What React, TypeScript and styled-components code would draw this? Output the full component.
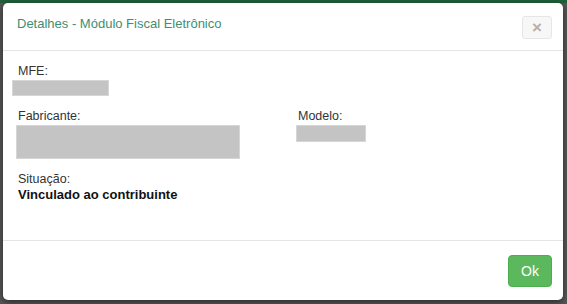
import React from 'react'
import styled, { createGlobalStyle } from 'styled-components'

const Global = createGlobalStyle`
  html, body {
    margin: 0;
    padding: 0;
    width: 567px;
    height: 304px;
    overflow: hidden;
    background: #4d4d4d;
    font-family: "Liberation Sans", Arial, sans-serif;
  }
`

const App = () => {
  return (
    <>
      <Global />
      <Backdrop>
        <Modal>
          <Header>
            <Title>Detalhes - Módulo Fiscal Eletrônico</Title>
            <Close>×</Close>
          </Header>
          <Body>
            <Field>
              <Label>MFE:</Label>
              <Masked w={97} h={16} shift={-4} />
            </Field>
            <Row>
              <Field>
                <Label>Fabricante:</Label>
                <Masked w={224} h={34} shift={0} />
              </Field>
              <Field>
                <Label>Modelo:</Label>
                <Masked w={70} h={17} shift={0} />
              </Field>
            </Row>
            <Field>
              <Label>Situação:</Label>
              <Value>Vinculado ao contribuinte</Value>
            </Field>
          </Body>
          <Footer>
            <OkButton>Ok</OkButton>
          </Footer>
        </Modal>
      </Backdrop>
    </>
  )
}

export default App

const Backdrop = styled.div`
    width: 567px;
    height: 304px;
    padding: 3px 4px 0 3px;
    box-sizing: border-box;
    background: linear-gradient(#1f5f3a 0, #1f5f3a 3px, #555 3px);
`
const Modal = styled.div`
    width: 560px;
    height: 297px;
    background-color: #fff;
    border-radius: 5px;
    display: flex;
    flex-direction: column;
    overflow: hidden;
    box-shadow: 0 2px 6px rgba(0, 0, 0, 0.5);
`
const Header = styled.div`
    height: 47px;
    display: flex;
    align-items: center;
    justify-content: space-between;
    padding: 0 11px 0 14px;
    border-bottom: 1px solid #e5e5e5;
`
const Title = styled.div`
    color: #3e8e72;
    font-size: 13px;
    margin-top: -6px;
`
const Close = styled.div`
    width: 30px;
    height: 23px;
    margin-top: 2px;
    border: 1px solid #e6e6e6;
    border-radius: 3px;
    background-color: #f7f7f7;
    color: #b0b0b0;
    font-size: 17px;
    font-weight: bold;
    display: flex;
    justify-content: center;
    align-items: center;
    box-sizing: border-box;
`
const Body = styled.div`
    height: 190px;
    padding: 13px 15px 0 13px;
    box-sizing: border-box;
    display: flex;
    flex-direction: column;
    gap: 13px;
    border-bottom: 1px solid #e5e5e5;
`
const Row = styled.div`
    display: flex;
    gap: 54px;
`
const Field = styled.div`
    display: flex;
    flex-direction: column;
    min-width: 226px;
`
const Label = styled.div`
    color: #333;
    font-size: 12.5px;
    line-height: 14px;
    padding-left: 2px;
`
const Masked = styled.div<{ w: number; h: number; shift: number }>`
    width: ${p => p.w}px;
    height: ${p => p.h}px;
    margin-left: ${p => p.shift}px;
    margin-top: 2px;
    background-color: #c4c4c4;
    border: 1px solid #d6d6d6;
    box-sizing: border-box;
`
const Value = styled.div`
    color: #111;
    font-size: 13px;
    font-weight: bold;
    line-height: 17px;
    padding-left: 2px;
`
const Footer = styled.div`
    flex: 1;
    display: flex;
    justify-content: flex-end;
    align-items: flex-start;
    padding: 14px 11px 0 0;
`
const OkButton = styled.div`
    width: 44px;
    height: 32px;
    display: flex;
    justify-content: center;
    align-items: center;
    color: #fff;
    font-size: 14px;
    background-color: #5cb85c;
    border: 1px solid #4cae4c;
    border-radius: 4px;
    box-sizing: border-box;
    cursor: pointer;
`
